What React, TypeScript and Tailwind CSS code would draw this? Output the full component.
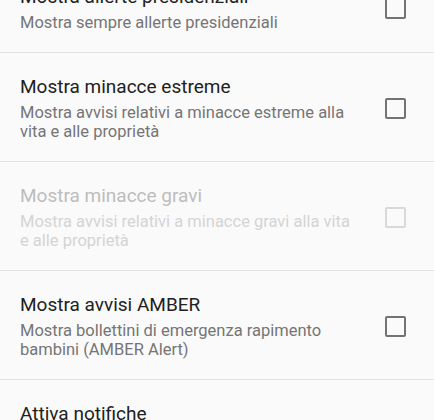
const PREFS = [
  {
    title: "Mostra allerte presidenziali",
    summary: "Mostra sempre allerte presidenziali",
    enabled: true,
  },
  {
    title: "Mostra minacce estreme",
    summary: "Mostra avvisi relativi a minacce estreme alla vita e alle proprietà",
    enabled: true,
  },
  {
    title: "Mostra minacce gravi",
    summary: "Mostra avvisi relativi a minacce gravi alla vita e alle proprietà",
    enabled: false,
  },
  {
    title: "Mostra avvisi AMBER",
    summary: "Mostra bollettini di emergenza rapimento bambini (AMBER Alert)",
    enabled: true,
  },
];

export default function App() {
  return (
    <div
      className="w-[434px] h-[420px] overflow-hidden bg-[#fafafa]"
      style={{ fontFamily: "Roboto, 'Noto Sans', sans-serif" }}
    >
      <div className="-mt-[37px] divide-y divide-[#e3e3e3]">
        {PREFS.map((p) => (
          <Row key={p.title} {...p} />
        ))}
        {/* last item, cut off by the window */}
        <div className="pl-5 pr-7 pt-[22px] pb-[20px]">
          <p className="text-[19px] leading-6 text-[#212121]">Attiva notifiche</p>
        </div>
      </div>
    </div>
  );
}

function Row({
  title,
  summary,
  enabled,
}: {
  title: string;
  summary: string;
  enabled: boolean;
}) {
  return (
    <div className="flex items-center pl-5 pr-7 pt-[22px] pb-[20px]">
      <div className="w-[342px] shrink-0">
        <p
          className={`text-[19px] leading-6 ${
            enabled ? "text-[#212121]" : "text-[#bdbdbd]"
          }`}
        >
          {title}
        </p>
        <p
          className={`mt-1 text-[16.5px] leading-[19px] ${
            enabled ? "text-[#757575]" : "text-[#d4d4d4]"
          }`}
        >
          {summary}
        </p>
      </div>
      <div
        className={`ml-auto w-[21px] h-[21px] shrink-0 rounded-[2px] border-[2.5px] ${
          enabled ? "border-[#737373]" : "border-[#d9d9d9]"
        }`}
      />
    </div>
  );
}
